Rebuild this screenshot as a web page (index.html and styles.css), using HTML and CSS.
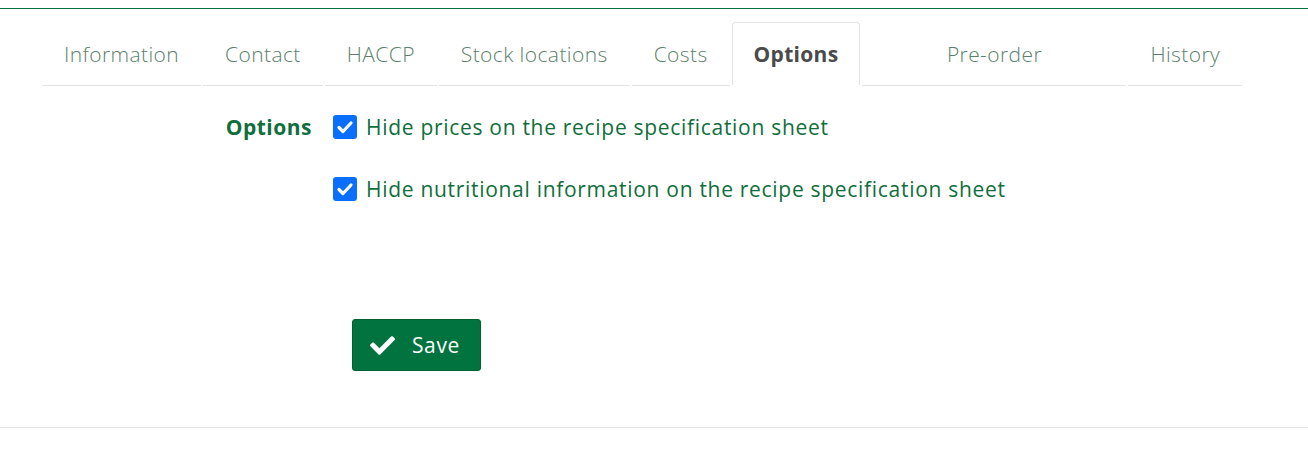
FILE: index.html
```html
<!DOCTYPE html>
<html lang="en">
<head>
<meta charset="utf-8">
<title>Options</title>
<link rel="stylesheet" href="styles.css">
</head>
<body>
<div class="page">
  <div class="content">
    <ul class="tabs">
      <li class="tab"><a>Information</a></li>
      <li class="tab"><a>Contact</a></li>
      <li class="tab"><a>HACCP</a></li>
      <li class="tab"><a>Stock locations</a></li>
      <li class="tab"><a>Costs</a></li>
      <li class="tab active"><a>Options</a></li>
      <li class="tab wide"><a>Pre-order</a></li>
      <li class="tab"><a>History</a></li>
    </ul>
    <div class="form">
      <div class="label">Options</div>
      <div class="checks">
        <label class="check"><span class="box"><svg viewBox="0 0 24 24" width="24" height="24"><path d="M6 12.5l4 4 8-8.5" fill="none" stroke="#fff" stroke-width="3.2" stroke-linecap="round" stroke-linejoin="round"/></svg></span>Hide prices on the recipe specification sheet</label>
        <label class="check"><span class="box"><svg viewBox="0 0 24 24" width="24" height="24"><path d="M6 12.5l4 4 8-8.5" fill="none" stroke="#fff" stroke-width="3.2" stroke-linecap="round" stroke-linejoin="round"/></svg></span>Hide nutritional information on the recipe specification sheet</label>
      </div>
    </div>
    <div class="actions">
      <button class="btn-save"><svg viewBox="0 0 512 512" width="25" height="25"><path fill="#fff" d="M173.9 439.4L7.5 273c-10-10-10-26.2 0-36.2l36.2-36.2c10-10 26.2-10 36.2 0L192 312.7 432.1 72.6c10-10 26.2-10 36.2 0l36.2 36.2c10 10 10 26.2 0 36.2L210.1 439.4c-10 10-26.2 10-36.2 0z"/></svg><span>Save</span></button>
    </div>
  </div>
</div>
</body>
</html>
```

FILE: styles.css
```css
html, body {
  margin: 0;
  padding: 0;
  background: #fff;
}
body {
  font-family: "Open Sans", Lato, sans-serif;
  padding-top: 8px;
}
.page {
  border-top: 1px solid #00733e;
  border-bottom: 1px solid #e6e6e6;
  height: 418px;
}
.content {
  width: 1200px;
  margin-left: 42px;
}
.tabs {
  list-style: none;
  margin: 13px 0 0;
  padding: 0;
  display: flex;
  gap: 2px;
}
.tab {
  border-bottom: 1px solid #e3e3e3;
}
.tab a {
  display: block;
  height: 62px;
  line-height: 62px;
  padding: 0 21px;
  font-size: 21px;
  letter-spacing: 0.4px;
  font-weight: 300;
  color: #5b7f6c;
  border: 1px solid transparent;
  border-bottom: none;
  text-align: center;
}
.tab.active {
  border-bottom-color: transparent;
}
.tab.active a {
  border-color: #e3e3e3;
  border-radius: 4px 4px 0 0;
  font-weight: 700;
  letter-spacing: 0.3px;
  color: #4a4a4a;
}
.tab.wide {
  flex: 1;
}
.form {
  display: grid;
  grid-template-columns: 270px 1fr;
  column-gap: 21px;
  margin-top: 27px;
}
.label {
  text-align: right;
  font-size: 21px;
  letter-spacing: 0.5px;
  font-weight: 700;
  color: #0f6e3c;
  line-height: 28px;
}
.checks {
  display: flex;
  flex-direction: column;
  gap: 34px;
}
.check {
  display: flex;
  align-items: center;
  gap: 9px;
  font-size: 21px;
  letter-spacing: 0.7px;
  color: #0f6e3c;
  line-height: 28px;
}
.box {
  width: 24px;
  height: 24px;
  background: #0b6ffd;
  border-radius: 3px;
  display: flex;
  flex-shrink: 0;
}
.actions {
  padding-left: 310px;
  margin-top: 116px;
}
.btn-save {
  display: flex;
  align-items: center;
  gap: 17px;
  width: 129px;
  height: 52px;
  padding: 0 17px;
  background: #00733e;
  border: 1px solid #00602f;
  border-radius: 3px;
  color: #fff;
  font-family: "Open Sans", Lato, sans-serif;
  font-size: 21px;
  letter-spacing: 0.6px;
}
```
